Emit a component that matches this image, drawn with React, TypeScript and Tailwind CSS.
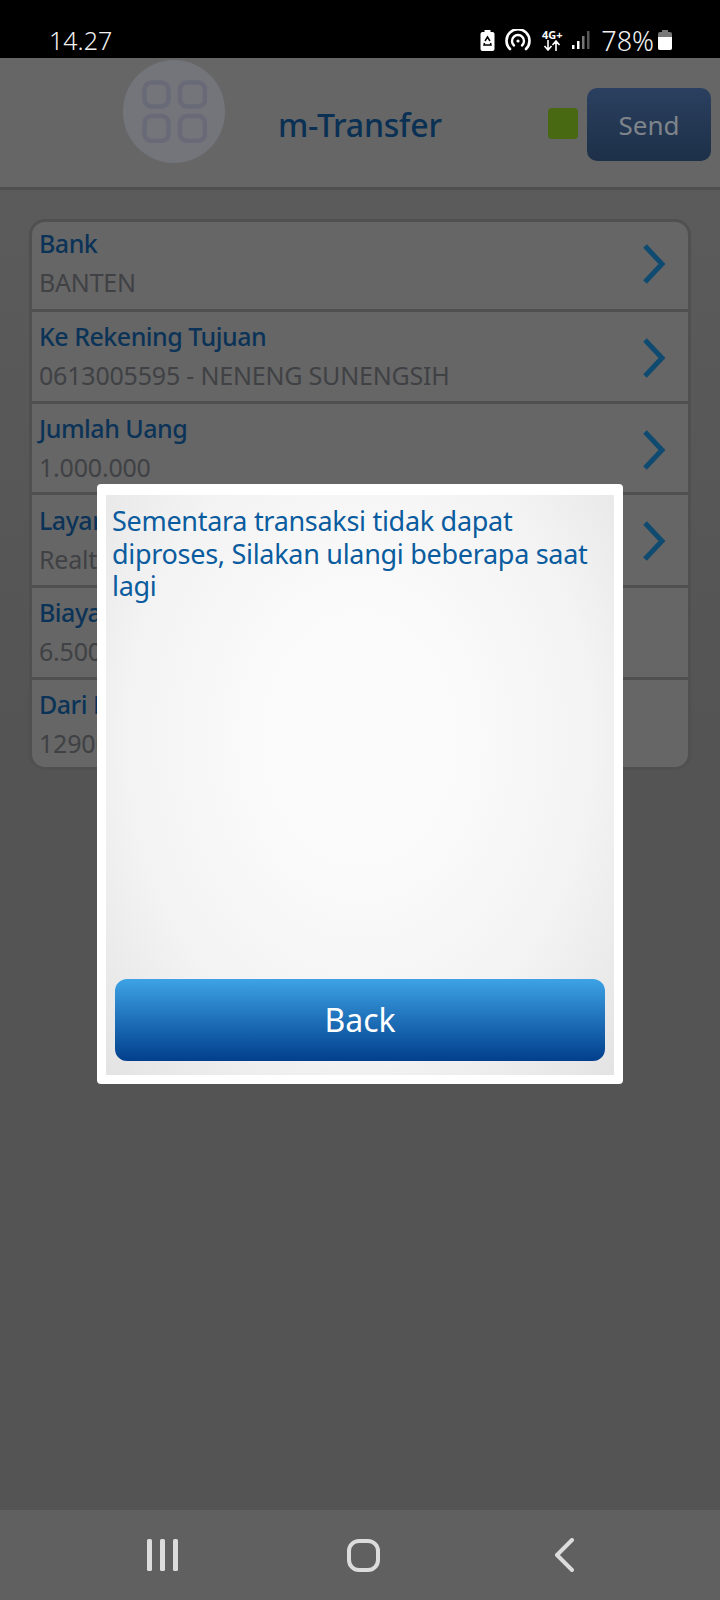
const rows = [
  { label: 'Bank', value: 'BANTEN', arrow: true, box: 'h-[90px] pt-[6px]', arrowPos: 'top-[22px]' },
  { label: 'Ke Rekening Tujuan', value: '0613005595 - NENENG SUNENGSIH', arrow: true, box: 'h-[92px] pt-[9px]', arrowPos: 'top-[26px]' },
  { label: 'Jumlah Uang', value: '1.000.000', arrow: true, box: 'h-[91px] pt-[9px]', arrowPos: 'top-[26px]' },
  { label: 'Layanan Transfer', value: 'Realtime', arrow: true, box: 'h-[93px] pt-[10px]', arrowPos: 'top-[26px]' },
  { label: 'Biaya', value: '6.500', arrow: false, box: 'h-[92px] pt-[9px]', arrowPos: '' },
  { label: 'Dari Rekening', value: '1290000000000', arrow: false, box: 'h-[87px] pt-[9px]', arrowPos: '' },
];

function StatusIcons() {
  return (
    <div className="flex items-center">
      {/* battery saver */}
      <svg width="15" height="21" viewBox="0 0 15 21">
        <rect x="4.500" y="0" width="6" height="3" fill="#fff" />
        <rect x="0.500" y="2" width="14" height="19" rx="2" fill="#fff" />
        <path d="M5 11l2.500-4 2.500 4M4.500 13l-.5 2h7l-.5-2" fill="none" stroke="#000" strokeWidth="1.500" />
      </svg>
      {/* hotspot */}
      <svg width="26" height="22" viewBox="0 0 26 22" fill="none" stroke="#fff" strokeLinecap="round" className="ml-[10px]">
        <path d="M5 20 A11.500 11.500 0 1 1 21 20" strokeWidth="2.600" />
        <path d="M9 16.500 A6 6 0 1 1 17 16.500" strokeWidth="2.400" />
        <circle cx="13" cy="12" r="1.600" fill="#fff" stroke="none" />
      </svg>
      {/* 4G+ */}
      <div className="ml-[10px] w-[22px] flex flex-col items-center text-white">
        <span className="text-[11px] leading-[11px] font-bold">4G+</span>
        <svg width="18" height="11" viewBox="0 0 18 11" fill="none" stroke="#fff" strokeWidth="1.600">
          <path d="M5 0v9M1.500 6L5 10l3.500-4M13 11V2M9.500 5L13 1l3.500 4" />
        </svg>
      </div>
      {/* signal */}
      <svg width="18" height="20" viewBox="0 0 18 20" className="ml-[9px]">
        <rect x="0" y="15" width="2.500" height="4" fill="#fff" />
        <rect x="5" y="11" width="2.500" height="8" fill="#fff" />
        <rect x="10" y="6" width="2.500" height="13" fill="#777" />
        <rect x="15" y="1" width="2.500" height="18" fill="#555" />
      </svg>
      <span className="ml-[11px] text-[27px] leading-none text-[#f2f2f2] font-light">78%</span>
      {/* battery */}
      <svg width="14" height="20" viewBox="0 0 14 20" className="ml-[4px]">
        <rect x="4" y="0" width="6" height="3" fill="#777" />
        <rect x="0" y="2" width="14" height="18" rx="2" fill="#777" />
        <path d="M0 7h14v11a2 2 0 0 1-2 2H2a2 2 0 0 1-2-2z" fill="#fff" />
      </svg>
    </div>
  );
}

function MenuIcon() {
  return (
    <div className="w-[102px] h-[103px] rounded-full bg-[#73757b] flex items-center justify-center">
      <svg width="65" height="63" viewBox="0 0 65 63" fill="none" stroke="#686a78" strokeWidth="4.500">
        <rect x="2.500" y="2.500" width="24" height="24" rx="7" />
        <rect x="38" y="2.500" width="25" height="24" rx="7" />
        <rect x="2.500" y="36" width="24" height="25" rx="7" />
        <rect x="38" y="36" width="25" height="25" rx="7" />
      </svg>
    </div>
  );
}

function Row({ label, value, arrow, box, arrowPos, last }: { label: string; value: string; arrow: boolean; box: string; arrowPos: string; last: boolean }) {
  return (
    <div className={`relative pl-[7px] ${box} ${last ? '' : 'border-b-[3px] border-[#505050]'}`}>
      <div className="text-[25px] leading-[30px] font-medium text-[#0b3358] tracking-[-0.5px]">{label}</div>
      <div className="mt-[9px] text-[25px] leading-[30px] text-[#3f4144] tracking-[-0.2px]">{value}</div>
      {arrow && (
        <svg width="24" height="40" viewBox="0 0 24 40" fill="none" stroke="#0f4a70" strokeWidth="5" className={`absolute right-[22px] ${arrowPos}`}>
          <path d="M3 2l17 18L3 38" />
        </svg>
      )}
    </div>
  );
}

export default function App() {
  return (
    <div className="relative w-[720px] h-[1600px] flex flex-col bg-[#545454] font-['Noto_Sans','Open_Sans',sans-serif] overflow-hidden">
      <div className="h-[58px] bg-black flex items-center justify-between pl-[49px] pr-[48px] pt-[22px] shrink-0">
        <span className="text-[25px] leading-none text-[#f2f2f2] font-light">14.27</span>
        <StatusIcons />
      </div>

      <header className="h-[132px] shrink-0 bg-[#666666] border-b-[3px] border-[#4f4f4f] flex items-start pr-[9px]">
        <div className="ml-[123px] mt-[2px]">
          <MenuIcon />
        </div>
        <h1 className="ml-[53px] mt-[47px] text-[32px] leading-[40px] font-medium text-[#0a3053] tracking-[-0.2px]">m-Transfer</h1>
        <div className="ml-auto mt-[50px] w-[30px] h-[31px] rounded-[4px] bg-[#486812]" />
        <button className="ml-[9px] mt-[30px] w-[124px] h-[73px] rounded-[10px] bg-gradient-to-b from-[#2b4060] to-[#1d3048] pt-[2px] text-[26px] text-[#7f848a]">
          Send
        </button>
      </header>

      <main className="flex-1 pt-[29px] pl-[29px] bg-gradient-to-b from-[#5b5b5b] to-[#545454] to-[40%]">
        <div className="w-[662px] rounded-[16px] border-[3px] border-[#505050] bg-[#666666] overflow-hidden">
          {rows.map((r, i) => (
            <Row key={r.label} label={r.label} value={r.value} arrow={r.arrow} box={r.box} arrowPos={r.arrowPos} last={i === rows.length - 1} />
          ))}
        </div>
      </main>

      <nav className="h-[90px] shrink-0 bg-[#606060] relative flex items-center">
        <svg width="32" height="32" viewBox="0 0 32 32" className="ml-[146px]">
          <rect x="1" y="0" width="5" height="32" rx="1.500" fill="#dcdcdc" />
          <rect x="14" y="0" width="5" height="32" rx="1.500" fill="#dcdcdc" />
          <rect x="27" y="0" width="5" height="32" rx="1.500" fill="#dcdcdc" />
        </svg>
        <svg width="33" height="33" viewBox="0 0 33 33" fill="none" stroke="#dcdcdc" strokeWidth="4" className="ml-[169px]">
          <rect x="2" y="2" width="29" height="29" rx="10" />
        </svg>
        <svg width="20" height="34" viewBox="0 0 20 34" fill="none" stroke="#dcdcdc" strokeWidth="4" strokeLinecap="round" strokeLinejoin="round" className="ml-[174px]">
          <path d="M18 2L3 17l15 15" />
        </svg>
      </nav>

      {/* error dialog */}
      <div className="absolute left-[97px] top-[484px] w-[526px] h-[600px] rounded-[4px] bg-white p-[9px] pt-[11px]">
        <div className="h-full flex flex-col bg-[radial-gradient(ellipse_at_50%_42%,#fbfbfb_25%,#f3f3f3_65%,#e3e3e3_100%)] px-[6px] pt-[10px] pb-[14px]">
          <p className="flex-1 text-[27px] leading-[32.500px] text-[#0b5c9e] tracking-[-0.3px]">
            Sementara transaksi tidak dapat diproses, Silakan ulangi beberapa saat lagi
          </p>
          <button className="mx-[3px] h-[82px] rounded-[12px] bg-gradient-to-b from-[#3ea3e6] to-[#033f8c] text-[32px] text-white">
            Back
          </button>
        </div>
      </div>
    </div>
  );
}
